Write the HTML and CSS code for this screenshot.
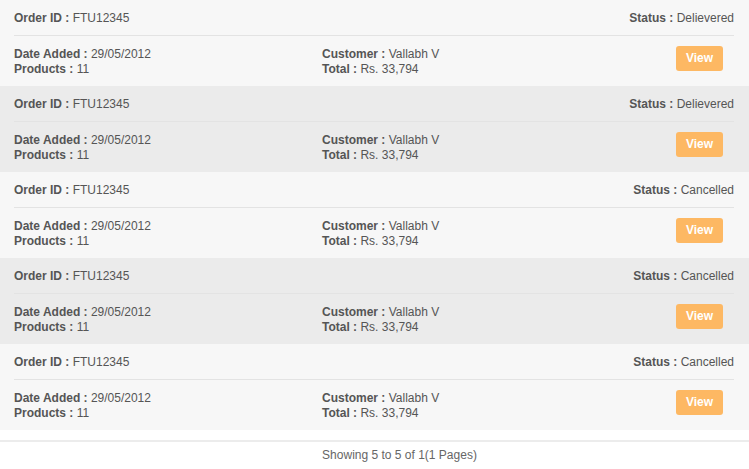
FILE: index.html
```html
<!DOCTYPE html>
<html>
<head>
<meta charset="utf-8">
<link rel="stylesheet" href="styles.css">
</head>
<body>
<div class="orders">
  <div class="order odd">
    <div class="order-head"><span><b>Order ID :</b> FTU12345</span><span><b>Status :</b> Delievered</span></div>
    <div class="order-body">
      <div class="col col-a"><div><b>Date Added :</b> 29/05/2012</div><div><b>Products :</b> 11</div></div>
      <div class="col col-b"><div><b>Customer :</b> Vallabh V</div><div><b>Total :</b> Rs. 33,794</div></div>
      <a class="btn">View</a>
    </div>
  </div>
  <div class="order even">
    <div class="order-head"><span><b>Order ID :</b> FTU12345</span><span><b>Status :</b> Delievered</span></div>
    <div class="order-body">
      <div class="col col-a"><div><b>Date Added :</b> 29/05/2012</div><div><b>Products :</b> 11</div></div>
      <div class="col col-b"><div><b>Customer :</b> Vallabh V</div><div><b>Total :</b> Rs. 33,794</div></div>
      <a class="btn">View</a>
    </div>
  </div>
  <div class="order odd">
    <div class="order-head"><span><b>Order ID :</b> FTU12345</span><span><b>Status :</b> Cancelled</span></div>
    <div class="order-body">
      <div class="col col-a"><div><b>Date Added :</b> 29/05/2012</div><div><b>Products :</b> 11</div></div>
      <div class="col col-b"><div><b>Customer :</b> Vallabh V</div><div><b>Total :</b> Rs. 33,794</div></div>
      <a class="btn">View</a>
    </div>
  </div>
  <div class="order even">
    <div class="order-head"><span><b>Order ID :</b> FTU12345</span><span><b>Status :</b> Cancelled</span></div>
    <div class="order-body">
      <div class="col col-a"><div><b>Date Added :</b> 29/05/2012</div><div><b>Products :</b> 11</div></div>
      <div class="col col-b"><div><b>Customer :</b> Vallabh V</div><div><b>Total :</b> Rs. 33,794</div></div>
      <a class="btn">View</a>
    </div>
  </div>
  <div class="order odd">
    <div class="order-head"><span><b>Order ID :</b> FTU12345</span><span><b>Status :</b> Cancelled</span></div>
    <div class="order-body">
      <div class="col col-a"><div><b>Date Added :</b> 29/05/2012</div><div><b>Products :</b> 11</div></div>
      <div class="col col-b"><div><b>Customer :</b> Vallabh V</div><div><b>Total :</b> Rs. 33,794</div></div>
      <a class="btn">View</a>
    </div>
  </div>
</div>
<div class="pager">Showing 5 to 5 of 1(1 Pages)</div>
</body>
</html>
```
FILE: styles.css
```css
html, body {
  margin: 0;
  padding: 0;
  background: #ffffff;
}
body {
  font-family: "Liberation Sans", Arial, sans-serif;
  font-size: 12px;
  color: #555555;
  width: 749px;
}
b {
  font-weight: bold;
}
.order {
  height: 86px;
  box-sizing: border-box;
}
.odd { background: #f7f7f7; }
.even { background: #ebebeb; }
.order-head {
  display: flex;
  justify-content: space-between;
  align-items: center;
  height: 36px;
  margin: 0 15px 0 14px;
  border-bottom: 1px solid #e3e3e3;
  box-sizing: border-box;
  padding-top: 1px;
}
.order-body {
  display: flex;
  align-items: flex-start;
  padding: 11px 0 0 14px;
  height: 50px;
  box-sizing: border-box;
  line-height: 15px;
}
.col-a { width: 308px; }
.col-b { flex: 1; }
.btn {
  display: block;
  width: 47px;
  height: 25px;
  line-height: 25px;
  text-align: center;
  background: #fdb863;
  color: #ffffff;
  font-weight: bold;
  border-radius: 3px;
  margin-right: 26px;
  margin-top: -1px;
}
.pager {
  margin-top: 10px;
  padding-left: 50px;
  border-top: 2px solid #ececec;
  border-bottom: 2px solid #ececec;
  height: 27px;
  line-height: 27px;
  text-align: center;
  color: #666666;
}
```
